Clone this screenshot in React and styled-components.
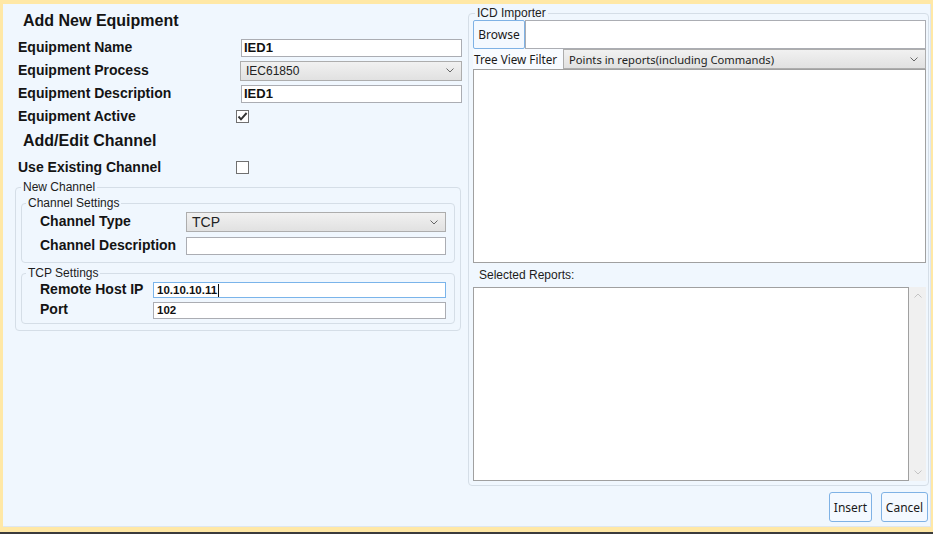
import React from "react";
import styled, { createGlobalStyle } from "styled-components";

const GlobalStyle = createGlobalStyle`
  html, body {
    margin: 0;
    padding: 0;
  }
  body {
    font-family: "Liberation Sans", Arial, sans-serif;
    color: #111;
  }
`;

const Window = styled.div`
  width: 933px;
  height: 534px;
  box-sizing: border-box;
  background: #ffe8a6;
  padding: 4px 2px 5px 3px;
  border-bottom: 2px solid #3b3b3b;
  display: flex;
`;

const Panel = styled.div`
  flex: 1;
  background: #f0f7fe;
  border-right: 1px solid #dfe7ee;
  border-bottom: 1px solid #dfe7ee;
  display: flex;
`;

const LeftColumn = styled.div`
  width: 447px;
  margin-left: 12px;
  padding-top: 7px;
  display: flex;
  flex-direction: column;
`;

const RightColumn = styled.div`
  flex: 1;
  margin-left: 6px;
  padding: 2px 1px 4px 0;
  display: flex;
  flex-direction: column;
`;

const SectionTitle = styled.h2`
  margin: ${(p) => p.$top || 0}px 0 0 8px;
  height: 20px;
  font-size: 16px;
  line-height: 20px;
  font-weight: bold;
  color: #141414;
`;

const FormGrid = styled.div`
  display: grid;
  grid-template-columns: ${(p) => p.$labelWidth}px 1fr;
  grid-auto-rows: ${(p) => p.$rowHeight}px;
  align-items: center;
  margin-top: ${(p) => p.$top || 0}px;
  padding-left: ${(p) => p.$indent || 0}px;
`;

const Label = styled.span`
  font-size: 14px;
  font-weight: bold;
  color: #141414;
  white-space: nowrap;
  margin-top: -2px;
`;

const TextBox = styled.div`
  height: ${(p) => p.$h || 18}px;
  margin-left: ${(p) => p.$offset || 0}px;
  box-sizing: border-box;
  border: 1px solid ${(p) => (p.$focus ? "#7ab4ea" : "#abadb3")};
  background: #fff;
  padding-left: ${(p) => p.$pad || 2}px;
  display: flex;
  align-items: center;
  font-size: ${(p) => p.$size || 13}px;
  font-weight: bold;
  color: #111;
`;

const Caret = styled.span`
  width: 1px;
  height: 13px;
  background: #111;
  margin-left: 1px;
`;

const SelectBox = styled.div`
  height: ${(p) => p.$h || 20}px;
  margin-left: ${(p) => p.$offset || 0}px;
  box-sizing: border-box;
  border: 1px solid #adadad;
  background: linear-gradient(#f1f1f1, #e1e1e1);
  padding: 0 7px 0 5px;
  display: flex;
  align-items: center;
  justify-content: space-between;
  font-family: ${(p) => (p.$ui ? '"Noto Sans", "Open Sans", sans-serif' : '"Liberation Sans", Arial, sans-serif')};
  font-size: ${(p) => p.$size || 12}px;
  color: #222;
  white-space: nowrap;
`;

const CheckBox = styled.span`
  width: 13px;
  height: 13px;
  box-sizing: border-box;
  border: 1px solid #707070;
  background: #fff;
  display: flex;
  align-items: center;
  justify-content: center;
`;

const Group = styled.fieldset`
  margin: ${(p) => p.$top || 0}px 0 0 0;
  padding: ${(p) => p.$pad};
  border: 1px solid #d5dee7;
  border-radius: 4px;
  min-width: 0;
`;

const Legend = styled.legend`
  padding: 0 2px;
  margin-left: ${(p) => p.$indent || 0}px;
  font-size: 12px;
  line-height: 14px;
  color: #1c1c1c;
`;

const BrowseRow = styled.div`
  display: flex;
  height: 29px;
`;

const UiButton = styled.button`
  height: ${(p) => p.$h || 29}px;
  width: ${(p) => p.$w}px;
  box-sizing: border-box;
  border: 1px solid #7fb2e5;
  border-radius: ${(p) => p.$radius || 2}px;
  background: #f4f9ff;
  padding: 0;
  font-family: "Noto Sans", "Open Sans", sans-serif;
  font-size: 12px;
  color: #1a1a1a;
`;

const FilePath = styled.div`
  flex: 1;
  border: 1px solid #abadb3;
  background: #fff;
`;

const FilterRow = styled.div`
  display: flex;
  height: 20px;
`;

const FilterLabel = styled.span`
  width: 89px;
  display: flex;
  align-items: center;
  padding-left: 1px;
  background: #f8fbff;
  font-family: "Noto Sans", "Open Sans", sans-serif;
  font-size: 11.7px;
  color: #1a1a1a;
`;

const TreeBox = styled.div`
  height: 194px;
  box-sizing: border-box;
  border: 1px solid #a0a0a0;
  background: #fff;
`;

const ListCaption = styled.div`
  height: 24px;
  display: flex;
  align-items: center;
  padding-left: 6px;
  font-size: 12px;
  color: #1c1c1c;
`;

const ListWrap = styled.div`
  height: 194px;
  display: flex;
`;

const ListBox = styled.div`
  flex: 1;
  border: 1px solid #a0a0a0;
  background: #fff;
`;

const ScrollBar = styled.div`
  width: 17px;
  background: #f0f0f0;
  display: flex;
  flex-direction: column;
  justify-content: space-between;
  align-items: center;
  padding: 6px 0;
`;

const ButtonRow = styled.div`
  display: flex;
  justify-content: flex-end;
  gap: 9px;
  margin-top: 6px;
  padding-right: 1px;
`;

const Chevron = ({ up, color = "#666" }) => (
  <svg width="8" height="5" viewBox="0 0 8 5">
    <polyline
      points={up ? "0.5,4.5 4,1 7.5,4.5" : "0.5,0.5 4,4 7.5,0.5"}
      fill="none"
      stroke={color}
      strokeWidth="1"
    />
  </svg>
);

const Check = ({ checked }) => (
  <CheckBox>
    {checked && (
      <svg width="11" height="11" viewBox="0 0 11 11">
        <polyline points="1.5,5.5 4,8.3 9.6,2" fill="none" stroke="#333" strokeWidth="1.9" />
      </svg>
    )}
  </CheckBox>
);

export default function App() {
  return (
    <>
      <GlobalStyle />
      <Window>
        <Panel>
          <LeftColumn>
            <SectionTitle>Add New Equipment</SectionTitle>
            <FormGrid $labelWidth={218} $rowHeight={23} $top={5} $indent={3}>
              <Label>Equipment Name</Label>
              <TextBox $offset={5}>IED1</TextBox>
              <Label>Equipment Process</Label>
              <SelectBox $offset={4}>
                IEC61850
                <Chevron />
              </SelectBox>
              <Label>Equipment Description</Label>
              <TextBox $offset={5}>IED1</TextBox>
              <Label>Equipment Active</Label>
              <Check checked />
            </FormGrid>

            <SectionTitle $top={3}>Add/Edit Channel</SectionTitle>
            <FormGrid $labelWidth={218} $rowHeight={23} $top={5} $indent={3}>
              <Label>Use Existing Channel</Label>
              <Check />
            </FormGrid>

            <Group $top={1} $pad="0 5px 6px 5px" style={{ marginRight: 1 }}>
              <Legend>New Channel</Legend>
              <Group $top={2} $pad="0 8px 4px 4px">
                <Legend>Channel Settings</Legend>
                <FormGrid $labelWidth={146} $rowHeight={24} $indent={14}>
                  <Label>Channel Type</Label>
                  <SelectBox $size={14}>
                    TCP
                    <Chevron />
                  </SelectBox>
                  <Label>Channel Description</Label>
                  <TextBox />
                </FormGrid>
              </Group>
              <Group $top={3} $pad="0 8px 3px 4px">
                <Legend>TCP Settings</Legend>
                <FormGrid $labelWidth={113} $rowHeight={20} $indent={14}>
                  <Label>Remote Host IP</Label>
                  <TextBox $h={16} $focus $pad={3} $size={11.5}>
                    10.10.10.11
                    <Caret />
                  </TextBox>
                  <Label>Port</Label>
                  <TextBox $h={17} $pad={3} $size={11.5}>
                    102
                  </TextBox>
                </FormGrid>
              </Group>
            </Group>
          </LeftColumn>

          <RightColumn>
            <Group $pad="0 2px 4px 4px">
              <Legend $indent={2}>ICD Importer</Legend>
              <BrowseRow>
                <UiButton $w={52}>Browse</UiButton>
                <FilePath />
              </BrowseRow>
              <FilterRow>
                <FilterLabel>Tree View Filter</FilterLabel>
                <SelectBox $h={20} $ui $size={11.2} style={{ flex: 1 }}>
                  Points in reports(including Commands)
                  <Chevron />
                </SelectBox>
              </FilterRow>
              <TreeBox />
              <ListCaption>Selected Reports:</ListCaption>
              <ListWrap>
                <ListBox />
                <ScrollBar>
                  <Chevron up color="#c4c4c4" />
                  <Chevron color="#c4c4c4" />
                </ScrollBar>
              </ListWrap>
            </Group>
            <ButtonRow>
              <UiButton $w={43} $h={30} $radius={3}>Insert</UiButton>
              <UiButton $w={47} $h={30} $radius={3}>Cancel</UiButton>
            </ButtonRow>
          </RightColumn>
        </Panel>
      </Window>
    </>
  );
}
